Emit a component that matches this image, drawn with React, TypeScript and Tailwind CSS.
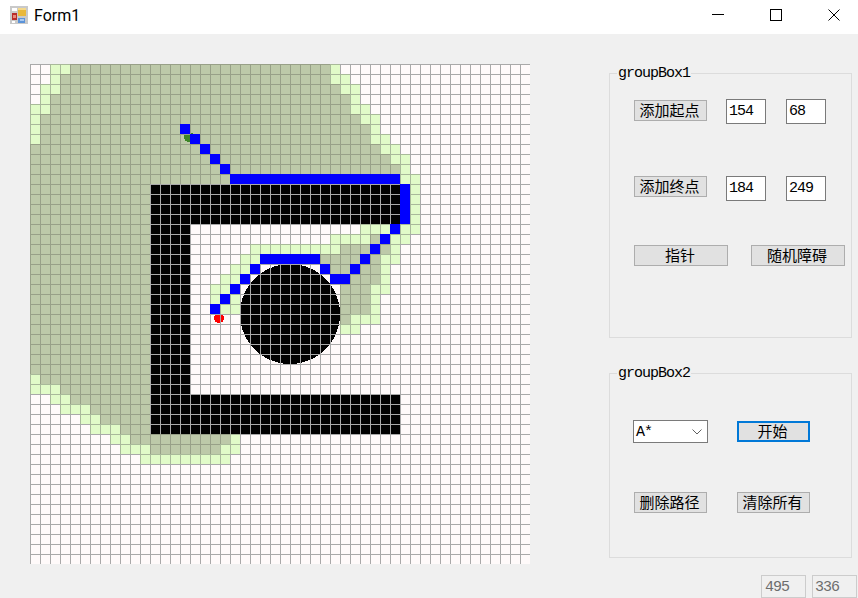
type Run = [number, number, number]

// [row, first col, last col]
const olive: Run[] = [
  [0, 4, 29], [1, 3, 29], [2, 3, 30], [3, 2, 31], [4, 2, 31], [5, 1, 32], [6, 1, 33], [7, 1, 33],
  [8, 0, 34], [9, 0, 35], [10, 0, 36], [11, 0, 36],
  ...Array.from({ length: 19 }, (_, i): Run => [12 + i, 0, 11]),
  [31, 1, 11], [32, 3, 11], [33, 4, 11], [34, 6, 11], [35, 7, 11], [36, 9, 11], [37, 10, 19], [38, 12, 18],
  [17, 34, 34], [18, 31, 35], [19, 29, 32], [19, 34, 34], [20, 30, 31], [20, 33, 34], [21, 32, 34],
  [22, 31, 33], [23, 31, 33], [24, 31, 33], [25, 31, 31],
]

const green: Run[] = [
  [0, 2, 3], [0, 30, 30], [1, 2, 2], [1, 30, 31], [2, 1, 2], [2, 31, 32], [3, 1, 1], [3, 32, 32],
  [4, 0, 1], [4, 32, 33], [5, 0, 0], [5, 33, 34], [6, 0, 0], [6, 34, 34], [7, 0, 0], [7, 34, 35],
  [8, 35, 36], [9, 36, 37], [10, 37, 37], [11, 37, 38], [12, 38, 38], [13, 38, 38], [14, 38, 38], [15, 38, 38],
  [16, 33, 35], [16, 37, 38], [17, 30, 33], [17, 36, 37], [18, 22, 30], [18, 36, 36], [19, 21, 22], [19, 35, 36],
  [20, 20, 21], [20, 35, 35], [21, 19, 20], [21, 35, 35], [22, 18, 19], [22, 34, 35], [23, 18, 18], [23, 20, 20],
  [23, 34, 34], [24, 19, 20], [24, 34, 34], [25, 32, 34], [26, 31, 32],
  [31, 0, 0], [32, 0, 2], [33, 2, 3], [34, 3, 5], [35, 5, 6], [36, 6, 8], [37, 8, 9], [37, 20, 20],
  [38, 9, 11], [38, 19, 20], [39, 11, 19],
]

const black: Run[] = [
  ...Array.from({ length: 25 }, (_, i): Run => [12 + i, 12, i < 4 || i > 20 ? 36 : 15]),
]

const path: Run[] = [
  [6, 15, 15], [7, 16, 16], [8, 17, 17], [9, 18, 18], [10, 19, 19], [11, 20, 36],
  [12, 37, 37], [13, 37, 37], [14, 37, 37], [15, 37, 37], [16, 36, 36], [17, 35, 35], [18, 34, 34],
  [19, 33, 33], [20, 32, 32], [21, 30, 31], [20, 29, 29], [19, 23, 28], [20, 22, 22], [21, 21, 21],
  [22, 20, 20], [23, 19, 19], [24, 18, 18],
]

const fills = (runs: Run[], color: string) =>
  runs.map(([r, a, b]) => (
    <rect key={`${r}-${a}`} x={a * 10} y={r * 10} width={(b - a + 1) * 10} height={10} fill={color} />
  ))

const cellLines = (runs: Run[]) =>
  runs
    .map(([r, a, b]) => {
      let d = ''
      for (let c = a; c <= b; c++) d += `M${c * 10} ${r * 10 + 0.5}h10M${c * 10 + 0.5} ${r * 10}v10`
      return d
    })
    .join('')

let allLines = ''
for (let i = 0; i < 50; i++) allLines += `M${i * 10 + 0.5} 0v500M0 ${i * 10 + 0.5}h500`

function GridCanvas() {
  return (
    <svg width="500" height="500" viewBox="0 0 500 500" shapeRendering="crispEdges" className="block shrink-0">
      <rect width="500" height="500" fill="#fffafa" />
      {fills(olive, '#bdc9a9')}
      {fills(green, '#e1fbc8')}
      {fills(black, '#000000')}
      <circle cx="159" cy="73" r="5" fill="#3c8527" />
      <circle cx="189" cy="254" r="5" fill="#ff0000" />
      <circle cx="260" cy="250" r="50" fill="#000000" />
      <path d={allLines} stroke="#a9a9a9" fill="none" />
      <path d={cellLines(green)} stroke="#a9b99a" fill="none" />
      <path d={cellLines(olive)} stroke="#98a088" fill="none" />
      {fills(path, '#0000ff')}
    </svg>
  )
}

function FormButton({ label, className }: { label: string; className: string }) {
  return (
    <button className={`h-[21px] shrink-0 border border-[#adadad] bg-[#e1e1e1] pb-[2px] pr-[2px] text-center text-[15px] leading-[17px] text-black ${className}`}>
      {label}
    </button>
  )
}

function NumberBox({ value, className }: { value: string; className: string }) {
  return (
    <div className={`h-[25px] w-[40px] shrink-0 border border-[#7a7a7a] bg-white pl-[2px] text-[15px] leading-[23px] tracking-[-1px] text-black [font-family:'Liberation_Mono',monospace] ${className}`}>
      {value}
    </div>
  )
}

function GroupBox({ title, className, children }: { title: string; className: string; children: React.ReactNode }) {
  return (
    <fieldset className={`w-[243px] border border-[#dcdcdc] ${className}`}>
      <legend className="ml-[7px] h-[14px] px-px text-[15px] leading-[15px] tracking-[-1px] text-black [font-family:'Liberation_Mono',monospace]">
        {title}
      </legend>
      {children}
    </fieldset>
  )
}

export default function App() {
  return (
    <div className="h-[598px] w-[858px] overflow-hidden bg-[#f0f0f0] [font-family:'Noto_Sans_CJK_SC',sans-serif]">
      {/* Title bar */}
      <div className="flex h-[34px] items-center bg-white">
        <svg width="18" height="18" viewBox="0 0 18 18" shapeRendering="crispEdges" className="mb-[4px] ml-[10px] shrink-0">
          <rect width="18" height="18" fill="#c9c9c9" />
          <rect x="2" y="2" width="5" height="3" fill="#ffffff" />
          <rect x="2" y="15" width="3" height="2" fill="#ffffff" />
          <rect x="2" y="7" width="5" height="7" fill="#b92c2c" />
          <rect x="3" y="9" width="3" height="3" fill="#e98a7a" />
          <rect x="8" y="2" width="8" height="8" fill="#e9b83a" />
          <rect x="8" y="2" width="8" height="2" fill="#f5d98a" />
          <rect x="8" y="12" width="7" height="5" fill="#5b93d9" />
          <rect x="10" y="13" width="4" height="2" fill="#a9c9f0" />
        </svg>
        <span className="mb-[2px] ml-[6px] text-[16px] leading-[20px] text-black [font-family:'Roboto',sans-serif]">Form1</span>
        <div className="mb-[4px] ml-auto mr-[18px] flex items-center gap-[46px]">
          <svg width="12" height="12" viewBox="0 0 12 12" shapeRendering="crispEdges" className="shrink-0">
            <path d="M0 5.5h12" stroke="#000" fill="none" />
          </svg>
          <svg width="12" height="12" viewBox="0 0 12 12" shapeRendering="crispEdges" className="shrink-0">
            <rect x="0.5" y="0.5" width="11" height="11" stroke="#000" fill="none" />
          </svg>
          <svg width="12" height="12" viewBox="0 0 12 12" className="shrink-0">
            <path d="M0.5 0.5l11 11M11.5 0.5l-11 11" stroke="#000" fill="none" />
          </svg>
        </div>
      </div>

      {/* Body */}
      <div className="flex pl-[30px] pt-[30px]">
        <GridCanvas />
        <div className="ml-[79px] mt-[2px] w-[249px] shrink-0">
          <GroupBox title="groupBox1" className="h-[272px]">
            <div className="flex items-start pl-[24px] pt-[19px]">
              <FormButton label="添加起点" className="mt-px w-[73px]" />
              <NumberBox value="154" className="ml-[19px]" />
              <NumberBox value="68" className="ml-[20px]" />
            </div>
            <div className="flex items-start pl-[24px] pt-[52px]">
              <FormButton label="添加终点" className="w-[73px]" />
              <NumberBox value="184" className="ml-[19px]" />
              <NumberBox value="249" className="ml-[20px]" />
            </div>
            <div className="flex items-start pl-[24px] pt-[44px]">
              <FormButton label="指针" className="w-[94px]" />
              <FormButton label="随机障碍" className="ml-[23px] w-[94px]" />
            </div>
          </GroupBox>

          <GroupBox title="groupBox2" className="mt-[28px] h-[192px]">
            <div className="flex items-start pl-[23px] pt-[40px]">
              <div className="flex h-[23px] w-[75px] shrink-0 items-center justify-between border border-[#7a7a7a] bg-white pl-[2px] pr-[5px] text-[15px] leading-[21px] tracking-[-1px] text-black [font-family:'Liberation_Mono',monospace]">
                <span className="pt-px">A*</span>
                <svg width="10" height="6" viewBox="0 0 10 6" className="shrink-0">
                  <path d="M0.5 0.5l4.5 4.5 4.5-4.5" stroke="#606060" fill="none" />
                </svg>
              </div>
              <button className="ml-[29px] mt-px h-[21px] w-[73px] shrink-0 border-2 border-[#0078d7] bg-[#e1e1e1] pb-[2px] pr-[2px] text-center text-[15px] leading-[15px] text-black">
                开始
              </button>
            </div>
            <div className="flex items-start pl-[24px] pt-[49px]">
              <FormButton label="删除路径" className="w-[73px]" />
              <FormButton label="清除所有" className="ml-[30px] w-[73px]" />
            </div>
          </GroupBox>

          <div className="mt-[17px] flex gap-[6px] pl-[152px]">
            <div className="h-[23px] w-[45px] shrink-0 border border-[#cccccc] pl-[3px] text-[15px] leading-[23px] tracking-[-1px] text-[#6d6d6d] [font-family:'Liberation_Mono',monospace]">495</div>
            <div className="h-[23px] w-[45px] shrink-0 border border-[#cccccc] pl-[2px] text-[15px] leading-[23px] tracking-[-1px] text-[#6d6d6d] [font-family:'Liberation_Mono',monospace]">336</div>
          </div>
        </div>
      </div>
    </div>
  )
}
